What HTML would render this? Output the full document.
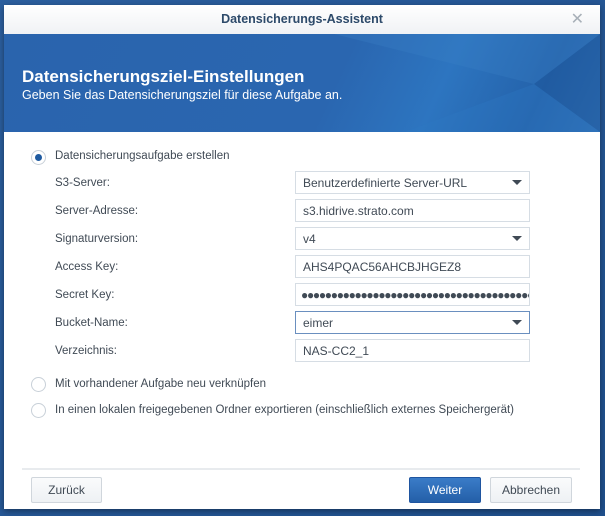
<!DOCTYPE html>
<html><head><style>
*{margin:0;padding:0;box-sizing:border-box}
body{width:605px;height:516px;overflow:hidden;background:linear-gradient(135deg,#2c5f9e,#1f4f8c);font-family:"Liberation Sans",sans-serif;font-size:11.5px;color:#404a55;position:relative}
.win{position:absolute;left:4px;top:5px;width:596px;height:504px;background:#fff;box-shadow:0 2px 6px rgba(0,0,0,.4)}
.title{height:29px;background:linear-gradient(#fff,#f0f2f5);text-align:center;line-height:29px;font-weight:bold;font-size:12.5px;color:#2d4a6a;position:relative}
.x{position:absolute;right:16px;top:0;color:#a8b0b8;font-weight:normal;font-size:16px}
.hdr{position:absolute;top:29px;left:0;width:596px;height:98px;background:linear-gradient(115deg,#2a64ad 0%,#2a66b0 55%,#2d75c0 72%,#2462aa 88%,#2f6fb5 100%);overflow:hidden}
.hdr h1{position:absolute;left:18px;top:33px;color:#fff;font-size:17px;font-weight:bold}
.hdr p{position:absolute;left:18px;top:54px;color:#fff;font-size:12.5px}
.lab{position:absolute;left:51px}
.f{position:absolute;left:291px;width:235px;height:23px;border:1px solid #d6dde4;padding-left:7px;line-height:22px;color:#404a55;font-size:12px}
.f.dd::after{content:"";position:absolute;right:7px;top:8px;border:5px solid transparent;border-top:5px solid #404a55;border-bottom:0}
.r{position:absolute;left:27px;width:15px;height:15px;border:1px solid #c8d0d8;border-radius:50%;background:#fff}
.r.on::after{content:"";position:absolute;left:3px;top:3px;width:7px;height:7px;border-radius:50%;background:#1f5aa0}
.rl{position:absolute;left:51px}
.btn{position:absolute;top:472px;height:26px;border:1px solid #d0d6dc;border-radius:2px;background:linear-gradient(#fafbfc,#eef1f4);text-align:center;line-height:24px;color:#404a55;font-size:12px}
</style></head><body>
<div class="win">
<div class="title">Datensicherungs-Assistent<span class="x">✕</span></div>
<div class="hdr">
<svg width="596" height="98" style="position:absolute;left:0;top:0"><polygon points="330,0 596,0 530,50" fill="#3a80c6" opacity=".3"/><polygon points="530,50 596,0 596,98" fill="#1a4f92" opacity=".35"/><polygon points="400,98 530,50 596,98" fill="#2f78c2" opacity=".35"/></svg>
<h1>Datensicherungsziel-Einstellungen</h1>
<p>Geben Sie das Datensicherungsziel für diese Aufgabe an.</p>
</div>
<div class="r on" style="top:145px"></div><div class="rl" style="top:145px">Datensicherungsaufgabe erstellen</div>
<div class="lab" style="top:172px">S3-Server:</div><div class="f dd" style="top:166px">Benutzerdefinierte Server-URL</div>
<div class="lab" style="top:200px">Server-Adresse:</div><div class="f" style="top:194px">s3.hidrive.strato.com</div>
<div class="lab" style="top:228px">Signaturversion:</div><div class="f dd" style="top:222px">v4</div>
<div class="lab" style="top:256px">Access Key:</div><div class="f" style="top:250px">AHS4PQAC56AHCBJHGEZ8</div>
<div class="lab" style="top:284px">Secret Key:</div><div class="f" style="top:278px;overflow:hidden;white-space:nowrap;font-size:12px;letter-spacing:-1.3px;padding-left:5px">●●●●●●●●●●●●●●●●●●●●●●●●●●●●●●●●●●●●●●●●●</div>
<div class="lab" style="top:312px">Bucket-Name:</div><div class="f dd" style="top:306px;border-color:#6a8fbf">eimer</div>
<div class="lab" style="top:340px">Verzeichnis:</div><div class="f" style="top:334px">NAS-CC2_1</div>
<div class="r" style="top:372px"></div><div class="rl" style="top:373px">Mit vorhandener Aufgabe neu verknüpfen</div>
<div class="r" style="top:398px"></div><div class="rl" style="top:399px">In einen lokalen freigegebenen Ordner exportieren (einschließlich externes Speichergerät)</div>
<div style="position:absolute;left:18px;top:463px;width:558px;height:2px;background:#e8ebee"></div>
<div class="btn" style="left:27px;width:71px">Zurück</div>
<div class="btn" style="left:405px;width:72px;background:linear-gradient(#3a7cc8,#245fa8);border-color:#1f55a0;color:#fff">Weiter</div>
<div class="btn" style="left:486px;width:82px">Abbrechen</div>
</div>
</body></html>
